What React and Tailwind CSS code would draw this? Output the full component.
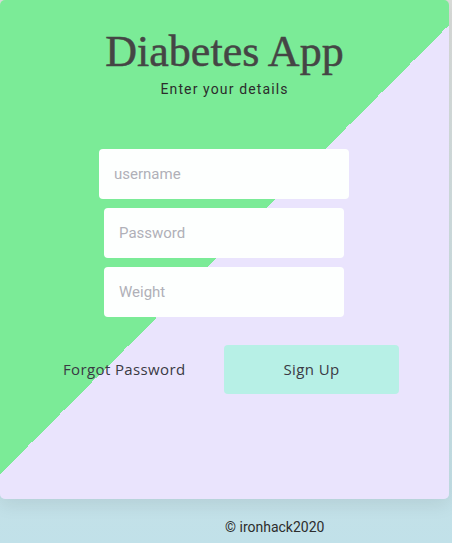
export default function App() {
  return (
    <div className="min-h-[543px] w-[452px] overflow-hidden bg-gradient-to-b from-[#dadcd9] to-[#c1e1e9]">
      <div className="h-[499px] w-[449px] rounded-[5px] bg-[linear-gradient(135deg,#7beb97_50%,#eae4fd_50%)] shadow-[0_6px_18px_rgba(0,0,0,0.08)] flex flex-col items-center">
        <h1 className="mt-[28px] text-[44px] leading-[48px] text-[#454545] font-['Liberation_Serif',serif] [-webkit-text-stroke:0.5px_#454545]">
          Diabetes App
        </h1>
        <p className="mt-[4px] text-[14px] leading-[18px] tracking-[0.08em] text-[#2c2c2c] font-['Roboto',sans-serif]">
          Enter your details
        </p>
        <div className="mt-[51px] mr-[1px] flex flex-col items-center gap-[9px] font-['Roboto',sans-serif]">
          <input
            placeholder="username"
            className="h-[50px] w-[250px] rounded-[4px] bg-[#fdfffe] px-[15px] text-[15px] text-[#555] placeholder:text-[#b0b0b8] outline-none"
          />
          <input
            placeholder="Password"
            className="h-[50px] w-[240px] rounded-[4px] bg-[#fdfffe] px-[15px] text-[15px] text-[#555] placeholder:text-[#b0b0b8] outline-none"
          />
          <input
            placeholder="Weight"
            className="h-[50px] w-[240px] rounded-[4px] bg-[#fdfffe] px-[15px] text-[15px] text-[#555] placeholder:text-[#b0b0b8] outline-none"
          />
        </div>
        <div className="mt-[28px] flex w-full items-center font-['Open_Sans',sans-serif] text-[15px] tracking-[0.025em] text-[#3a3a44]">
          <span className="ml-[63px] w-[161px]">Forgot Password</span>
          <button className="h-[49px] w-[175px] rounded-[4px] bg-[#b7f0e6] text-[#3a3a44]">
            Sign Up
          </button>
        </div>
      </div>
      <p className="mt-[19px] pl-[225px] text-[14px] leading-[18px] text-[#2d2d2d] font-['Roboto',sans-serif]">
        © ironhack2020
      </p>
    </div>
  );
}
